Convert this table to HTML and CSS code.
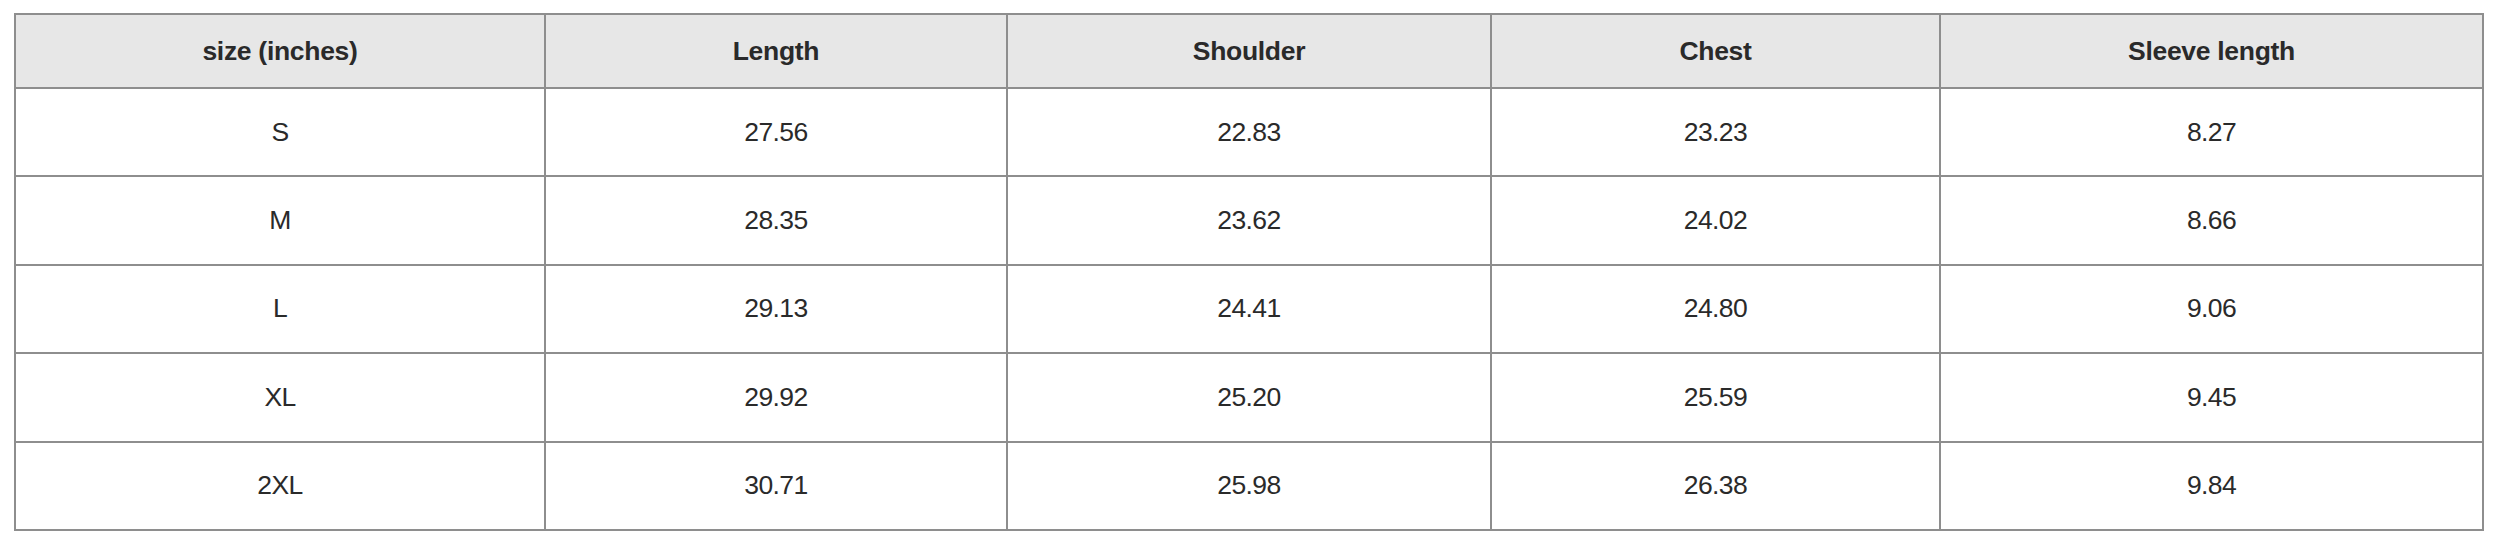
FILE: index.html
```html
<!DOCTYPE html>
<html>
<head>
<meta charset="utf-8">
<link rel="stylesheet" href="styles.css">
</head>
<body>
<div class="wrap">
<table class="size-table">
  <colgroup>
    <col class="c1"><col class="c2"><col class="c3"><col class="c4"><col class="c5">
  </colgroup>
  <thead>
    <tr><th>size (inches)</th><th>Length</th><th>Shoulder</th><th>Chest</th><th>Sleeve length</th></tr>
  </thead>
  <tbody>
    <tr><td>S</td><td>27.56</td><td>22.83</td><td>23.23</td><td>8.27</td></tr>
    <tr><td>M</td><td>28.35</td><td>23.62</td><td>24.02</td><td>8.66</td></tr>
    <tr><td>L</td><td>29.13</td><td>24.41</td><td>24.80</td><td>9.06</td></tr>
    <tr><td>XL</td><td>29.92</td><td>25.20</td><td>25.59</td><td>9.45</td></tr>
    <tr><td>2XL</td><td>30.71</td><td>25.98</td><td>26.38</td><td>9.84</td></tr>
  </tbody>
</table>
</div>
</body>
</html>
```

FILE: styles.css
```css
html, body {
  margin: 0;
  padding: 0;
  background: #ffffff;
}
.wrap {
  padding: 13px 18px 0 14px;
}
.size-table {
  width: 2468px;
  table-layout: fixed;
  border-collapse: collapse;
  font-family: "Liberation Sans", Arial, sans-serif;
  color: #2a2a2a;
}
.c1 { width: 530px; }
.c2 { width: 462px; }
.c3 { width: 484px; }
.c4 { width: 449px; }
.c5 { width: 543px; }
.size-table th,
.size-table td {
  border: 2px solid #8e8e8e;
  text-align: center;
  vertical-align: middle;
  padding: 0;
}
.size-table th {
  background: #e7e7e7;
  height: 72px;
  font-size: 26.5px;
  font-weight: bold;
  letter-spacing: -0.3px;
}
.size-table td {
  height: 86.4px;
  font-size: 26.5px;
  font-weight: normal;
  letter-spacing: -0.6px;
}
```
